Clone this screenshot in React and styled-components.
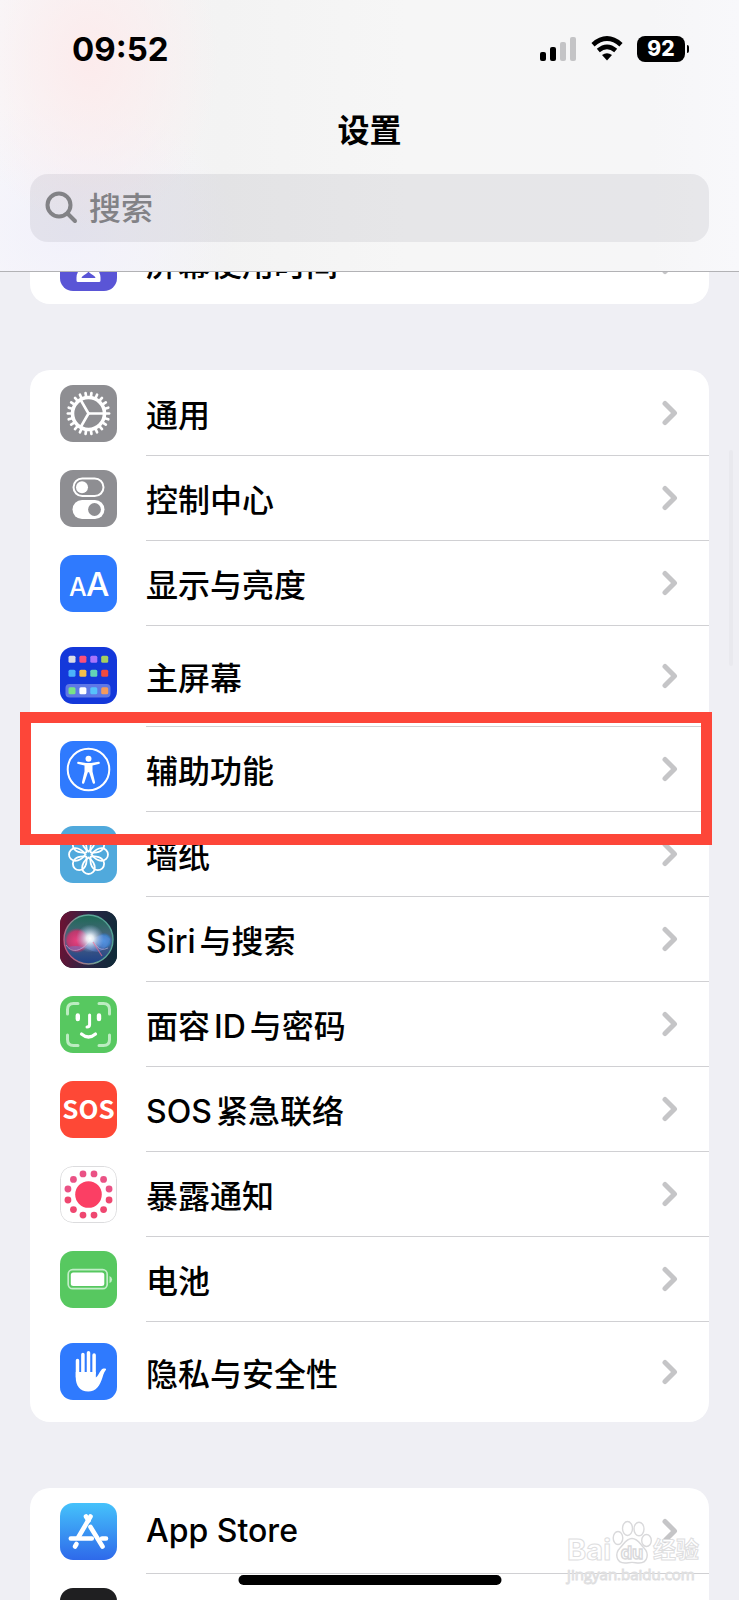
import React from 'react';
import styled, { createGlobalStyle } from 'styled-components';

const GlobalStyle = createGlobalStyle`
  * {
    box-sizing: border-box;
  }

  body {
    margin: 0;
    background-color: #efeff4;
    color: #000;
    font-family: Inter, 'Noto Sans CJK SC', sans-serif;
  }
`;

const polar = (radius, degrees) => {
  const angle = (degrees * Math.PI) / 180;
  return [28.5 + radius * Math.cos(angle), 28.5 + radius * Math.sin(angle)];
};

const HourglassIcon = () => (
  <g>
    <path
      d='M18 9.5h21v4c0 8-8 10-8 15s8 7 8 15v3H18v-3c0-8 8-10 8-15s-8-7-8-15z'
      fill='#fff'
      stroke='#fff'
      strokeWidth='3'
      strokeLinejoin='round'
    />
    <path d='M21.500 44c1-3.500 6-3.500 7-7 1 3.500 6 3.500 7 7z' fill='#5a55d6' />
  </g>
);

const GearIcon = () => (
  <g fill='none' stroke='#fff' strokeLinecap='round'>
    <circle cx='28.5' cy='28.5' r='16' strokeWidth='3.6' />
    {Array.from({ length: 22 }, (_, i) => {
      const [x1, y1] = polar(17, (i * 360) / 22);
      const [x2, y2] = polar(20.6, (i * 360) / 22);
      return <line key={i} x1={x1} y1={y1} x2={x2} y2={y2} strokeWidth='2.7' />;
    })}
    {[0, 120, 240].map((degrees) => {
      const [x, y] = polar(15, degrees);
      return <line key={degrees} x1='28.5' y1='28.5' x2={x} y2={y} strokeWidth='2.6' />;
    })}
  </g>
);

const TogglesIcon = () => (
  <g>
    <rect x='13.5' y='8.5' width='30' height='17.600' rx='8.8' fill='none' stroke='#fff' strokeWidth='2' />
    <circle cx='22' cy='17.3' r='6' fill='#fff' />
    <rect x='12.500' y='30' width='32' height='19' rx='9.5' fill='#fff' />
    <circle cx='34.500' cy='39.500' r='6.4' fill='#8e8e92' />
  </g>
);

const TextSizeIcon = () => (
  <g fill='#fff' fontFamily='Inter, sans-serif' fontWeight='500'>
    <text x='9' y='41' fontSize='25'>A</text>
    <text x='26' y='41' fontSize='33'>A</text>
  </g>
);

const homeApps = [
  ['#dcdde6', '#fb5078', '#a874fb', '#a5cf5f'],
  ['#4cb2fb', '#f5bd4b', '#62d3b6', '#ef4a42'],
  ['#78e287', '#ffffff', '#56c1fb', '#f59a5c'],
];

const HomeScreenIcon = () => (
  <g>
    <rect x='5.500' y='37' width='45' height='13.500' rx='4' fill='#fff' opacity='.32' />
    {homeApps.map((row, r) =>
      row.map((color, c) => (
        <rect key={color} x={8.500 + c * 10.900} y={[8.800, 22.800, 40.200][r]} width='7' height='7' rx='1.5' fill={color} />
      ))
    )}
  </g>
);

const AccessibilityIcon = () => (
  <g>
    <circle cx='28.5' cy='28.5' r='20.8' fill='none' stroke='#fff' strokeWidth='2' />
    <circle cx='28.5' cy='17.8' r='3' fill='#fff' />
    <path
      d='M18.500 20.800l7.500 1.200h5l7.500-1.200c1.600 0 1.800 1.900.3 2.300l-6.300 1.500v6l2.500 10.500c.3 1.700-1.600 2.300-2.300.8l-3.600-10.700h-1.200l-3.600 10.700c-.7 1.500-2.600.9-2.300-.8l2.500-10.500v-6l-6.300-1.500c-1.500-.4-1.300-2.300.3-2.300z'
      fill='#fff'
    />
  </g>
);

const FlowerIcon = () => (
  <g fill='none' stroke='#fff' strokeWidth='1.8'>
    {Array.from({ length: 8 }, (_, i) => (
      <path
        key={i}
        d='M28.500 25.500C24.500 22.500 22.200 19 22.200 15.300a6.300 6.300 0 0 1 12.600 0c0 3.700-2.300 7.200-6.300 10.200z'
        transform={`rotate(${i * 45} 28.5 28.5)`}
      />
    ))}
  </g>
);

const SiriIcon = () => (
  <g>
    <defs>
      <linearGradient id='siriBase' x1='0' y1='.4' x2='1' y2='.5'>
        <stop offset='0' stopColor='#6b1233' />
        <stop offset='.5' stopColor='#2b2546' />
        <stop offset='1' stopColor='#0f2a38' />
      </linearGradient>
      <linearGradient id='siriSphere' x1='.5' y1='0' x2='.5' y2='1'>
        <stop offset='0' stopColor='#1d6a55' />
        <stop offset='.5' stopColor='#4f6482' />
        <stop offset='1' stopColor='#1b3f87' />
      </linearGradient>
      <radialGradient id='siriPink'>
        <stop offset='0' stopColor='#e8417f' />
        <stop offset='.75' stopColor='#d0326c' stopOpacity='.85' />
        <stop offset='1' stopColor='#c22f66' stopOpacity='0' />
      </radialGradient>
      <radialGradient id='siriBlue'>
        <stop offset='0' stopColor='#479fe8' />
        <stop offset='.7' stopColor='#3c86d2' stopOpacity='.8' />
        <stop offset='1' stopColor='#2b65b5' stopOpacity='0' />
      </radialGradient>
      <radialGradient id='siriGlow'>
        <stop offset='0' stopColor='#fff' />
        <stop offset='.25' stopColor='#f4faff' stopOpacity='.9' />
        <stop offset='1' stopColor='#a9c8f5' stopOpacity='0' />
      </radialGradient>
      <linearGradient id='siriRing' x1='0' y1='.6' x2='1' y2='.2'>
        <stop offset='0' stopColor='#c2577f' />
        <stop offset='.5' stopColor='#62a898' />
        <stop offset='1' stopColor='#4f9f93' />
      </linearGradient>
    </defs>
    <rect width='57' height='57' fill='url(#siriBase)' />
    <circle cx='28.5' cy='28.5' r='24.500' fill='url(#siriSphere)' />
    <circle cx='17' cy='29.500' r='12.500' fill='url(#siriPink)' />
    <circle cx='44' cy='30' r='8.500' fill='url(#siriBlue)' />
    <path d='M8 36c8 6 15 3 22-5s13-9 20-3c-4 12-12 15-20 11S16 34 8 36z' fill='#5f86d8' opacity='.45' />
    <path d='M6 34c7 10 17 5 24-5 6 3 8 13 18 8' fill='none' stroke='#d4c4ef' opacity='.55' />
    <circle cx='30' cy='27.500' r='14' fill='url(#siriGlow)' />
    <path d='M33 31l9 14' stroke='#ef6d93' strokeWidth='1.2' opacity='.7' />
    <circle cx='28.5' cy='28.5' r='24.500' fill='none' stroke='url(#siriRing)' strokeWidth='1.4' />
  </g>
);

const FaceIdIcon = () => (
  <g fill='none' strokeLinecap='round'>
    <path
      d='M7.500 18v-4.500q0-6 6-6H18M39 7.500h4.500q6 0 6 6V18M49.500 39v4.500q0 6-6 6H39M18 49.500h-4.500q-6 0-6-6V39'
      stroke='#bcecc1'
      strokeWidth='3'
    />
    <path d='M17.800 19.500v3.500M39 19.500v3.500' stroke='#fff' strokeWidth='4.4' />
    <path d='M29.600 19v9.500q0 2.500-2.600 2.500' stroke='#fff' strokeWidth='3' />
    <path d='M21.500 38q7 6 14 0' stroke='#fff' strokeWidth='3.2' />
  </g>
);

const SosIcon = () => (
  <text
    x='28.5'
    y='38'
    fill='#fff'
    fontFamily='"Noto Sans CJK SC", sans-serif'
    fontSize='26'
    fontWeight='700'
    textAnchor='middle'
  >
    SOS
  </text>
);

const ExposureIcon = () => (
  <g fill='#fb3f64'>
    <rect x='.5' y='.5' width='56' height='56' rx='12' fill='none' stroke='#dcdcde' />
    <circle cx='28.5' cy='28.5' r='13.300' />
    {Array.from({ length: 12 }, (_, i) => {
      const [cx, cy] = polar(21.3, i * 30 + 15);
      return <circle key={i} cx={cx} cy={cy} r='3.4' fill={cy < 28 ? '#ea5285' : '#ef4770'} />;
    })}
  </g>
);

const BatteryIcon = () => (
  <g fill='#fff'>
    <rect x='8.200' y='18.700' width='39' height='19' rx='4.500' fill='none' stroke='#c3eec8' strokeWidth='1.7' />
    <rect x='10.800' y='21.500' width='33.500' height='13.500' rx='2.500' />
    <path d='M49.500 25q2.600 1.200 2.600 3.500t-2.600 3.500z' fill='#c3eec8' />
  </g>
);

const HandIcon = () => (
  <g fill='none' stroke='#fff' strokeWidth='3.500' strokeLinecap='round'>
    <path d='M17.500 17.500V34M22.900 11.500V30M28.500 9.800V30M34.100 12V30' />
    <path
      d='M15.750 29h20.100v5.500c2-1 3.400-5 5.400-7.500 1.600-2 5.400-1.700 4.800-.2-1.400 1.300-2.300 3.700-3.500 7.400-2.600 8.300-6.300 14.300-14.300 14.300-8.300 0-12.500-6-12.500-14z'
      fill='#fff'
      stroke='none'
    />
  </g>
);

const AppStoreIcon = () => (
  <g fill='none' stroke='#fff' strokeWidth='4.600' strokeLinecap='round'>
    <path d='M30.500 13.500L18.500 34' />
    <path d='M26 13.500l2.500 4M30.500 24L42.500 43.500' />
    <path d='M10.800 35.500h21M42 35.500h4' />
    <path d='M16.500 41l-1.500 2.500' />
  </g>
);

const Icon = ({ color, tall, children }) => (
  <IconTile viewBox='0 0 57 57' $color={color} $tall={tall} aria-hidden='true'>
    {children}
  </IconTile>
);

const Chevron = () => (
  <ChevronSvg viewBox='0 0 16 26' aria-hidden='true'>
    <path d='M3 3.500L12.500 13L3 22.500' />
  </ChevronSvg>
);

const mainRows = [
  { label: '通用', color: '#8e8e92', icon: <GearIcon /> },
  { label: '控制中心', color: '#8e8e92', icon: <TogglesIcon /> },
  { label: '显示与亮度', color: '#2f7afe', icon: <TextSizeIcon /> },
  { label: '主屏幕', color: '#1438da', icon: <HomeScreenIcon />, tall: true },
  { label: '辅助功能', color: '#2f7afe', icon: <AccessibilityIcon />, marked: true },
  { label: '墙纸', color: '#50a9dc', icon: <FlowerIcon /> },
  { label: 'Siri与搜索', color: '#251f38', icon: <SiriIcon /> },
  { label: '面容ID与密码', color: '#57c860', icon: <FaceIdIcon /> },
  { label: 'SOS紧急联络', color: '#fe4836', icon: <SosIcon /> },
  { label: '暴露通知', color: '#fff', icon: <ExposureIcon /> },
  { label: '电池', color: '#57c860', icon: <BatteryIcon /> },
  { label: '隐私与安全性', color: '#2f7afe', icon: <HandIcon />, tall: true },
];

const SettingsRow = ({ label, color, icon, tall, marked }) => (
  <Row>
    <RowLink href='#' $tall={tall}>
      <Icon color={color} tall={tall}>
        {icon}
      </Icon>
      <RowBody>
        <span>{label}</span>
        <Chevron />
      </RowBody>
    </RowLink>
    {marked && <Marker />}
  </Row>
);

const StatusBar = () => (
  <Status>
    <Time>09:52</Time>
    <StatusIcons>
      <svg width='37' height='26' viewBox='0 0 37 26' aria-hidden='true'>
        <rect x='0' y='16' width='6' height='9' rx='2' />
        <rect x='10' y='11' width='6' height='14' rx='2' />
        <rect x='20' y='6' width='6' height='19' rx='2' fill='#c4c4c6' />
        <rect x='30' y='1' width='6' height='24' rx='2' fill='#c4c4c6' />
      </svg>
      <svg width='32' height='26' viewBox='0 0 32 26' aria-hidden='true'>
        <path d='M2 8.700Q16-3.500 30 8.700' fill='none' stroke='#000' strokeWidth='4.8' />
        <path d='M7.300 14.500Q16 7.200 24.700 14.500' fill='none' stroke='#000' strokeWidth='4.6' />
        <path d='M11 19Q16 15.300 21 19L16 24.500z' />
      </svg>
      <BatteryBadge>92</BatteryBadge>
    </StatusIcons>
  </Status>
);

const Watermark = () => (
  <WatermarkBox aria-hidden='true'>
    <WatermarkLogo>
      <span>Bai</span>
      <svg width='40' height='44' viewBox='0 0 40 44'>
        <g fill='#fff' stroke='#d9d9db' strokeWidth='1.4'>
          <ellipse cx='6' cy='18' rx='4.800' ry='6.500' />
          <ellipse cx='15.500' cy='8.500' rx='5' ry='7' />
          <ellipse cx='27' cy='9' rx='5' ry='6.800' />
          <ellipse cx='34.500' cy='20.500' rx='4.800' ry='6' />
          <path d='M20 18.500c6 0 8 5.500 12 9.500 5 5 4.500 15-5 15-3 0-4-.6-7-.6s-4 .6-7 .6c-9.500 0-10-10-5-15 4-4 6-9.500 12-9.500z' />
          <text x='20' y='39' fontSize='18' textAnchor='middle'>du</text>
        </g>
      </svg>
      <span>经验</span>
    </WatermarkLogo>
    <WatermarkUrl>jingyan.baidu.com</WatermarkUrl>
  </WatermarkBox>
);

const App = () => {
  return (
    <Screen>
      <GlobalStyle />
      <Header>
        <StatusBar />
        <Title>设置</Title>
        <SearchBox>
          <svg width='34' height='34' viewBox='0 0 34 34' aria-hidden='true'>
            <circle cx='14' cy='14' r='11.5' />
            <path d='M22.500 22.500L30 30' />
          </svg>
          <input type='search' placeholder='搜索' aria-label='搜索' />
        </SearchBox>
      </Header>
      <Content>
        <Group>
          <SettingsRow label='屏幕使用时间' color='#5a55d6' icon={<HourglassIcon />} />
        </Group>
        <Group>
          {mainRows.map((row) => (
            <SettingsRow key={row.label} {...row} />
          ))}
        </Group>
        <Group>
          <SettingsRow
            label='App Store'
            color='linear-gradient(#45c2fb, #2e69ea)'
            icon={<AppStoreIcon />}
          />
          <SettingsRow color='#1f1f21' />
        </Group>
      </Content>
      <ScrollThumb />
      <HomeIndicator />
      <Watermark />
    </Screen>
  );
};

const Screen = styled.div`
  position: relative;
  display: flex;
  flex-direction: column;
  height: 100vh;
  overflow: hidden;
`;

const Header = styled.header`
  flex: none;
  padding: 0 30px 29px;
  border-bottom: 1px solid #b2b2b5;
  background: radial-gradient(ellipse 130px 170px at 90px 60px, #fcebec, transparent),
    radial-gradient(ellipse 170px 130px at 70px 230px, #f2f1fb, transparent),
    linear-gradient(90deg, #f8f8fa, #f3f3f3 30%, #f6f6f6 55%, #f6f6f7 88%, #f8f8fb);
  z-index: 1;
`;

const Status = styled.div`
  display: flex;
  align-items: center;
  justify-content: space-between;
  height: 98px;
  padding: 0 20px 0 42px;
`;

const Time = styled.span`
  font-size: 33px;
  font-weight: 700;
`;

const StatusIcons = styled.div`
  display: flex;
  align-items: center;
  gap: 14px;
`;

const BatteryBadge = styled.span`
  position: relative;
  width: 48px;
  margin-right: 4px;
  border-radius: 8px;
  background-color: #000;
  color: #fff;
  font-size: 21px;
  font-weight: 800;
  line-height: 26px;
  text-align: center;

  &::after {
    content: '';
    position: absolute;
    top: 9px;
    right: -4px;
    width: 2px;
    height: 8px;
    border-radius: 0 2px 2px 0;
    background-color: #000;
  }
`;

const Title = styled.h1`
  height: 76px;
  margin: 0;
  font-size: 32px;
  font-weight: 700;
  line-height: 66px;
  text-align: center;
`;

const SearchBox = styled.label`
  display: flex;
  align-items: center;
  gap: 10px;
  height: 68px;
  padding: 0 15px;
  border-radius: 18px;
  background-color: rgba(118, 118, 128, 0.12);

  svg {
    flex: none;
    fill: none;
    stroke: #828286;
    stroke-width: 4px;
    stroke-linecap: round;
  }

  input {
    flex: 1;
    min-width: 0;
    padding: 0;
    border: 0;
    outline: 0;
    background: none;
    color: inherit;
    font: inherit;
    font-size: 32px;
    font-weight: 500;

    &::placeholder {
      color: #828286;
    }
  }
`;

/* the list is scrolled, so its first group starts under the header */
const Content = styled.main`
  flex: 1;
  min-height: 0;
  display: flex;
  flex-direction: column;
  gap: 66px;
  margin-top: -53px;
  padding: 0 30px;
`;

const Group = styled.ul`
  margin: 0;
  padding: 0;
  border-radius: 20px;
  background-color: #fff;
  list-style: none;
`;

const RowBody = styled.span`
  flex: 1;
  display: flex;
  align-items: center;
  justify-content: space-between;
  padding-right: 31px;
`;

const Row = styled.li`
  position: relative;

  & + & ${RowBody} {
    border-top: 1px solid #d0d0d3;
  }
`;

const RowLink = styled.a`
  display: flex;
  gap: 29px;
  height: ${(props) => (props.$tall ? '101px' : '85px')};
  padding-left: 30px;
  color: inherit;
  font-size: 32px;
  font-weight: 500;
  text-decoration: none;
  text-autospace: normal;
`;

const IconTile = styled.svg`
  flex: none;
  align-self: center;
  width: 57px;
  height: 57px;
  margin-top: ${(props) => (props.$tall ? '0' : '2px')};
  border-radius: 13px;
  background: ${(props) => props.$color};
`;

const ChevronSvg = styled.svg`
  width: 16px;
  height: 26px;
  fill: none;
  stroke: #c5c5c7;
  stroke-width: 5px;
  stroke-linecap: round;
  stroke-linejoin: round;
`;

const Marker = styled.div`
  position: absolute;
  top: -14px;
  right: -3px;
  bottom: -34px;
  left: -10px;
  border: 11px solid #fd4639;
  z-index: 1;
  pointer-events: none;
`;

const ScrollThumb = styled.div`
  position: absolute;
  top: 450px;
  right: 6px;
  width: 4px;
  height: 216px;
  border-radius: 2px;
  background-color: #e9e9ee;
`;

const HomeIndicator = styled.div`
  position: absolute;
  bottom: 15px;
  left: 50%;
  width: 263px;
  height: 10px;
  border-radius: 5px;
  background-color: #000;
  transform: translateX(-50%);
`;

const WatermarkBox = styled.div`
  position: absolute;
  right: 40px;
  bottom: 16px;
  color: #fff;
  -webkit-text-stroke: 1px #dededf;
`;

const WatermarkLogo = styled.div`
  display: flex;
  align-items: flex-end;
  gap: 1px;
  font-size: 23px;
  font-weight: 700;
  line-height: 28px;

  span:first-child {
    font-size: 29px;
  }
`;

const WatermarkUrl = styled.div`
  font-family: 'Open Sans', sans-serif;
  font-size: 15px;
  line-height: 20px;
`;

export default App;
